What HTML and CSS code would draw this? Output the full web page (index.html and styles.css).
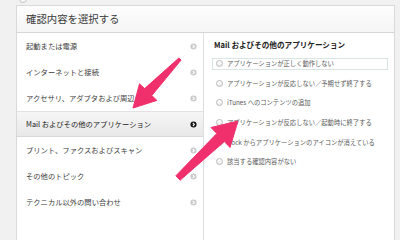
FILE: index.html
```html
<!DOCTYPE html>
<html lang="ja">
<head>
  <meta charset="UTF-8">
  <title>確認内容を選択する</title>
  <link rel="stylesheet" href="styles.css">
</head>
<body>
  <div class="top"><span class="dot"></span></div>
  <div class="panel">
    <div class="head">確認内容を選択する</div>
    <div class="cols">
      <ul class="topics">
        <li>起動または電源<svg class="chev" viewBox="0 0 8 8"><circle cx="4" cy="4" r="3.5"/><path d="M3.2 2.2 L5 4 L3.2 5.8"/></svg></li>
        <li>インターネットと接続<svg class="chev" viewBox="0 0 8 8"><circle cx="4" cy="4" r="3.5"/><path d="M3.2 2.2 L5 4 L3.2 5.8"/></svg></li>
        <li>アクセサリ、アダプタおよび周辺<svg class="chev" viewBox="0 0 8 8"><circle cx="4" cy="4" r="3.5"/><path d="M3.2 2.2 L5 4 L3.2 5.8"/></svg></li>
        <li class="on">Mail およびその他のアプリケーション<svg class="chev" viewBox="0 0 8 8"><circle cx="4" cy="4" r="3.5"/><path d="M3.2 2.2 L5 4 L3.2 5.8"/></svg></li>
        <li>プリント、ファクスおよびスキャン<svg class="chev" viewBox="0 0 8 8"><circle cx="4" cy="4" r="3.5"/><path d="M3.2 2.2 L5 4 L3.2 5.8"/></svg></li>
        <li>その他のトピック<svg class="chev" viewBox="0 0 8 8"><circle cx="4" cy="4" r="3.5"/><path d="M3.2 2.2 L5 4 L3.2 5.8"/></svg></li>
        <li>テクニカル以外の問い合わせ<svg class="chev" viewBox="0 0 8 8"><circle cx="4" cy="4" r="3.5"/><path d="M3.2 2.2 L5 4 L3.2 5.8"/></svg></li>
      </ul>
      <div class="detail">
        <h2>Mail およびその他のアプリケーション</h2>
        <ul class="opts">
          <li><label class="hover"><span class="radio"></span>アプリケーションが正しく動作しない</label></li>
          <li><label><span class="radio"></span>アプリケーションが反応しない／予期せず終了する</label></li>
          <li><label><span class="radio"></span>iTunes へのコンテンツの追加</label></li>
          <li><label><span class="radio"></span>アプリケーションが反応しない／起動時に終了する</label></li>
          <li><label><span class="radio"></span>Dock からアプリケーションのアイコンが消えている</label></li>
          <li><label><span class="radio"></span>該当する確認内容がない</label></li>
        </ul>
      </div>
    </div>
  </div>
  <svg class="arrows" width="400" height="240" viewBox="0 0 400 240">
    <polygon points="181.1,60 151.8,95.5 156.9,100.4 133,108 139.5,83.8 144.6,88.6 178.9,58"/>
    <polygon points="180.1,180.2 224.4,141.5 230,147.5 238,121 211,127.5 216.8,133.5 175.9,175.8"/>
  </svg>
</body>
</html>
```

FILE: styles.css
```css
*{margin: 0; padding: 0; box-sizing: border-box;}
body{background: #f1f1f1; font-family: "Noto Sans CJK JP", "Liberation Sans", sans-serif; color: #333; width: 400px; height: 240px; overflow: hidden; position: relative;}
ul{list-style: none;}
div.top{height: 10px;}
span.dot{display: block; width: 8px; height: 8px; margin: -5px 0 0 19px; border: 1px solid #c4c4c4; border-radius: 50%; background: #fafafa;}
div.panel{margin-left: 16px; width: 379px; height: 240px; background: #fff; border: 1px solid #d9d9d9;}
div.head{height: 27px; padding-left: 9px; font-size: 10.4px; line-height: 26px; color: #3a3a3a; background: linear-gradient(#fdfdfd, #f5f5f5); border-bottom: 1px solid #d6d6d6;}
div.cols{display: flex; height: 210px;}
ul.topics{width: 187px; border-right: 1px solid #dedede;}
ul.topics li{display: flex; align-items: center; justify-content: space-between; height: 26px; padding: 0 6px 0 9px; font-size: 7.3px; color: #3c3c3c;}
ul.topics li.on{background: linear-gradient(#f6f6f6, #e8e8e8); border-top: 1px solid #e2e2e2; border-bottom: 1px solid #d8d8d8; color: #222;}
svg.chev{width: 7px; height: 7px; flex: none;}
svg.chev circle{fill: #c9c9c9;}
svg.chev path{fill: none; stroke: #fff; stroke-width: 1.3;}
li.on svg.chev circle{fill: #111;}
div.detail{flex: 1; padding: 7px 6px 0 8px;}
div.detail h2{font-size: 7.6px; font-weight: bold; line-height: 10px; color: #222; padding-left: 2px; margin-bottom: 4px;}
ul.opts li{display: flex; align-items: center; height: 19.6px;}
ul.opts label{display: flex; align-items: center; gap: 4px; width: 100%; height: 12px; padding-left: 3px; border: 1px solid transparent; font-size: 6.3px; color: #5a5a5a;}
ul.opts label.hover{border-color: #d9e4e4;}
span.radio{width: 7px; height: 7px; flex: none; border: 1px solid #b9b9b9; border-radius: 50%; background: linear-gradient(#fff, #ececec);}
svg.arrows{position: absolute; left: 0; top: 0; pointer-events: none;}
svg.arrows polygon{fill: #f0306d; stroke: #f0306d; stroke-width: 1; stroke-linejoin: round;}
```
